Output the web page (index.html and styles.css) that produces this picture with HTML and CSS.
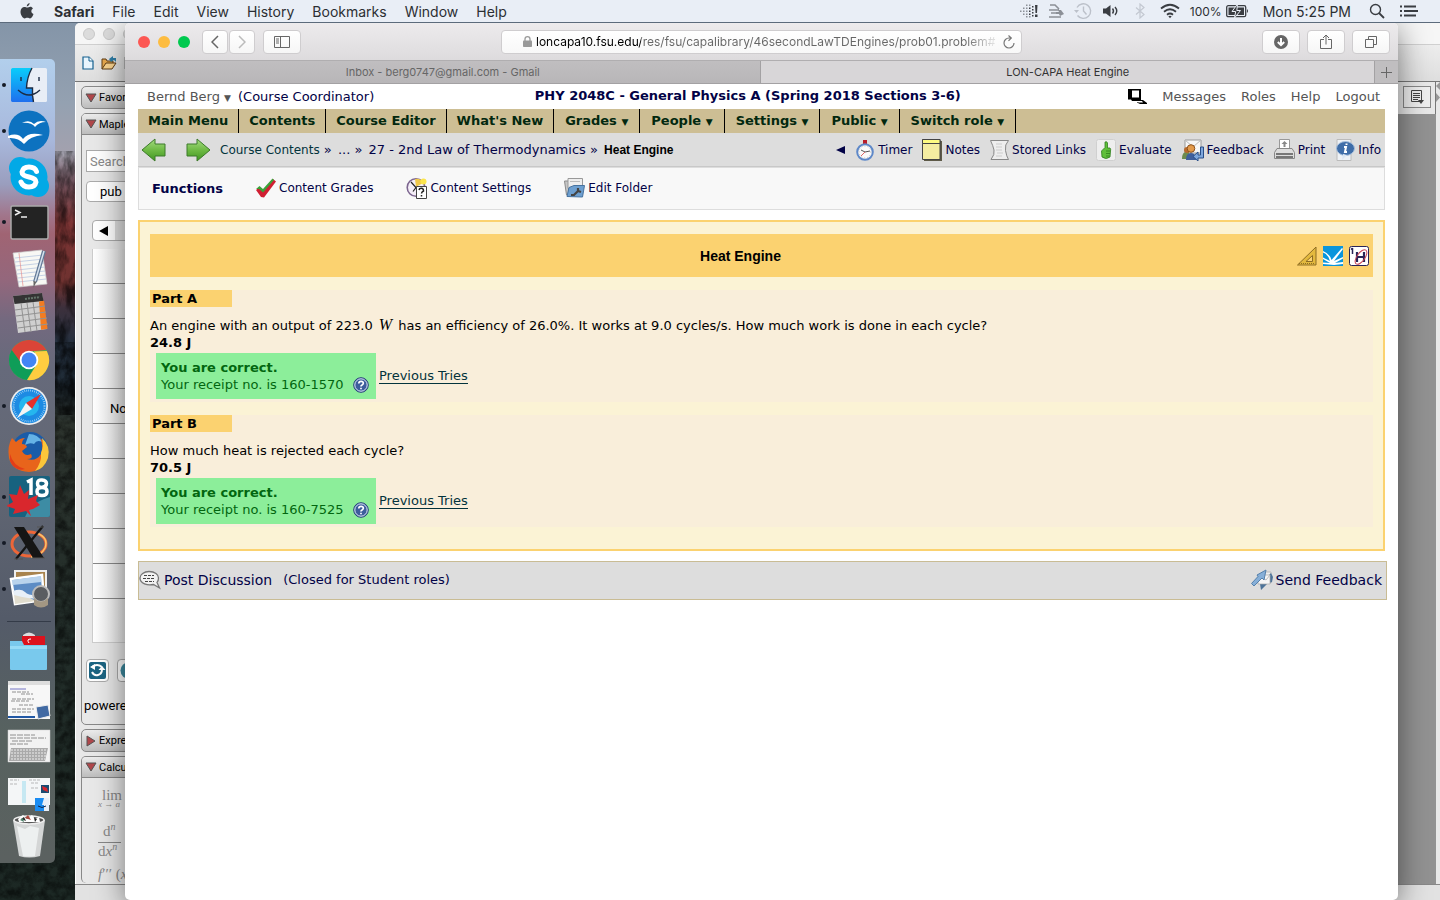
FILE: index.html
```html
<!DOCTYPE html>
<html lang="en">

<head>
    <title>LON-CAPA Heat Engine</title>
    <meta charset="utf-8">
    <meta name="viewport" content="width=device-width, initial-scale=1">
    <link rel="stylesheet" href="styles.css">
</head>

<body>
    <!-- System menu bar -->
    <header class="menubar">
        <svg class="apple" width="14" height="16" viewBox="0 0 14 16"><path fill="#3a3d42" d="M9.600 0c.1 1.500-1.200 3.300-2.800 3.400C6.600 1.900 8.100.2 9.600 0zM12.900 5.400c-2.300 1.500-1.900 4.500.6 5.500-.6 1.800-2 4.500-3.500 4.500-1 0-1.400-.6-2.700-.6s-1.700.6-2.600.6C2.800 15.400.5 12 .5 8.700c0-3.200 2-4.800 3.900-4.800 1.200 0 2 .7 2.900.7.800 0 1.800-.8 3.100-.8 1 0 1.900.6 2.500 1.600z"/></svg>
        <nav class="menus">
            <a href="#" class="app-name">Safari</a>
            <a href="#">File</a>
            <a href="#">Edit</a>
            <a href="#">View</a>
            <a href="#">History</a>
            <a href="#">Bookmarks</a>
            <a href="#">Window</a>
            <a href="#">Help</a>
        </nav>
        <div class="status">
            <svg width="18" height="16" viewBox="0 0 18 16"><g fill="#3a3d42"><path d="M15 2h2.500l-.5 8h-1.500zM15 11.500h2.500v2.500H15z"/><path d="M12 3h1.500v1.500H12zM12 6h1.500v1.500H12zM12 9h1.500v1.500H12zM12 12h1.500v1.500H12zM9 4.500h1.500V6H9zM9 7.500h1.500V9H9zM9 10.500h1.500V12H9z"/></g><path fill="#8c9097" d="M6 1.500h1.500V3H6zM6 4.500h1.500V6H6zM6 7.500h1.500V9H6zM6 10.500h1.500V12H6zM6 13h1.500v1.500H6zM3 4.500h1.500V6H3zM3 7.500h1.500V9H3zM3 10.500h1.500V12H3zM0 7.500h1.500V9H0zM9 1.500h1.500V3H9zM9 13h1.500v1.500H9z"/></svg>
            <svg width="16" height="16" viewBox="0 0 16 16"><path fill="none" stroke="#8c9097" stroke-width="1.600" d="M2 2h5l4 4M1 7h10M3 10h9M1 14h12"/><path fill="#8c9097" d="M10 7h3l3 4-4 2-1-2H8V9h3z"/></svg>
            <svg width="18" height="18" viewBox="0 0 18 18"><g fill="none" stroke="#bcc1ca" stroke-width="1.400"><path d="M3 5.500A7.300 7.300 0 1 1 3.500 13.500"/><path d="M9.500 4.500V9l3 3.500"/></g><path fill="#bcc1ca" d="M0 8h5L2.500 11z"/></svg>
            <svg width="18" height="16" viewBox="0 0 18 16"><path fill="#3a3d42" d="M1 5.500h3L8.500 2v12L4 10.500H1z"/><path fill="none" stroke="#3a3d42" stroke-width="1.400" d="M10.500 5.500q2 2.500 0 5M13 4q3.500 4 0 8"/></svg>
            <svg class="bt" width="10" height="16" viewBox="0 0 10 16"><path fill="none" stroke="#c3c8d1" stroke-width="1.200" d="M1 4.500l8 7L5 15V1l4 3.500-8 7"/></svg>
            <svg width="20" height="16" viewBox="0 0 20 16"><g fill="none" stroke="#3a3d42" stroke-width="1.800"><path d="M1 5.500q9-7.500 18 0M4 8.700q6-5 12 0M7 11.700q3-2.500 6 0"/></g><path fill="#3a3d42" d="M8.300 13.300q1.700-1.300 3.400 0L10 15.200z"/></svg>
            <span class="charge">100%</span>
            <svg class="battery" width="23" height="14" viewBox="0 0 23 14"><rect x=".7" y="1.700" width="19" height="11" rx="1.500" fill="none" stroke="#3a3d42" stroke-width="1.300"/><rect x="2.500" y="3.500" width="15.500" height="7.500" fill="#3a3d42"/><path fill="#3a3d42" d="M21 5v4q2-2 0-4z"/><path fill="#3a3d42" stroke="#e9eef6" stroke-width="1" d="M11.500 0L6 7.500h3.700L8.500 14l6-7.500h-3.700z"/></svg>
            <span class="clock">Mon 5:25 PM</span>
            <svg class="find" width="16" height="16" viewBox="0 0 16 16"><circle cx="6.500" cy="6.500" r="5" fill="none" stroke="#3a3d42" stroke-width="1.400"/><path stroke="#3a3d42" stroke-width="1.800" d="M10 10l5 5"/></svg>
            <svg width="18" height="12" viewBox="0 0 18 12"><path stroke="#3a3d42" stroke-width="2" d="M0 1.500h2M0 6h2M0 10.500h2M4 1.500h12M4 6h14M4 10.500h12"/></svg>
        </div>
    </header>

    <main class="desktop">
        <svg class="wallpaper" width="80" height="880" preserveAspectRatio="none">
            <filter id="rock"><feTurbulence type="fractalNoise" baseFrequency=".12 .05" numOctaves="4"/><feColorMatrix values="0 0 0 0 0  0 0 0 0 0  0 0 0 0 0  2 1 0 0 -1.100"/></filter>
            <filter id="tree"><feTurbulence type="fractalNoise" baseFrequency=".12" numOctaves="4"/><feColorMatrix values="0 0 0 0 0  0 0 0 0 0  0 0 0 0 0  2 1 0 0 -1.100"/></filter>
            <rect y="150" width="80" height="220" filter="url(#rock)" opacity=".6"/>
            <rect y="370" width="80" height="510" filter="url(#tree)" opacity=".5"/>
        </svg>

        <!-- Maple window, mostly behind Safari -->
        <section class="maple">
            <div class="maple-title"><i></i><i></i><i></i></div>
            <div class="maple-tools">
                <svg width="12" height="14" viewBox="0 0 12 14"><path fill="#e8f5fd" stroke="#14618f" stroke-width="1.200" d="M1 1h6l4 4v8H1z"/><path fill="#fff" stroke="#14618f" d="M7 1v4h4"/></svg>
                <svg width="16" height="14" viewBox="0 0 16 14"><path fill="#e8a94e" stroke="#5f3c14" d="M1 13V3h4l1 2h6v3"/><path fill="#fbd590" stroke="#5f3c14" d="M1 13l4-6h10l-4 6z"/><path fill="#2f7fa8" d="M8 3l4-3v2h3v4l-2-2-3 2z"/></svg>
                <svg width="14" height="14" viewBox="0 0 14 14"><path fill="#ddd" stroke="#888" d="M1 1h12v12H1zM3 1v5h8V1"/></svg>
            </div>
            <div class="maple-body">
                <aside class="palettes">
                    <div class="palette-head boxed"><svg width="12" height="10" viewBox="0 0 12 10"><path fill="#b0474b" stroke="#555" d="M1 1h10L6 9z"/></svg>Favor</div>
                    <div class="palette cloud">
                        <div class="palette-head"><svg width="12" height="10" viewBox="0 0 12 10"><path fill="#b0474b" stroke="#555" d="M1 1h10L6 9z"/></svg>Maple</div>
                        <div class="cloud-body">
                            <input class="cloud-search" type="text" placeholder="Search" aria-label="Search">
                            <button class="cloud-group">pub</button>
                            <button class="cloud-back" aria-label="Back"><svg width="9" height="10" viewBox="0 0 9 10"><path d="M9 0v10L0 5z"/></svg></button>
                            <ul class="cloud-list">
                                <li></li><li></li><li></li><li></li><li>No</li><li></li><li></li><li></li><li></li><li></li><li></li>
                            </ul>
                            <div class="cloud-actions">
                                <button aria-label="Refresh"><svg width="17" height="17" viewBox="0 0 17 17"><rect width="17" height="17" rx="2" fill="#1b6482"/><path fill="none" stroke="#fff" stroke-width="2" d="M3 5q5-4 10 0M3 10q2 4 6 3 4-1 4-6"/><path fill="#fff" d="M9.500 8h7L13 4zM1 5l5-3v6z"/></svg></button>
                                <button aria-label="Web"><svg width="17" height="17" viewBox="0 0 17 17"><circle cx="8.500" cy="8.500" r="8" fill="#3e8ba0"/></svg></button>
                            </div>
                            <p class="powered">powere</p>
                        </div>
                    </div>
                    <div class="palette-head boxed"><svg width="12" height="12" viewBox="0 0 12 12"><path fill="#b0474b" stroke="#555" d="M2 1v10l8-5z"/></svg>Expre</div>
                    <div class="palette calculus">
                        <div class="palette-head"><svg width="12" height="10" viewBox="0 0 12 10"><path fill="#b0474b" stroke="#555" d="M1 1h10L6 9z"/></svg>Calcu</div>
                        <div class="formulas">
                            <div class="limit"><span>lim</span><small><i>x</i> → <i>a</i></small></div>
                            <div class="frac"><span>d<sup><i>n</i></sup></span><span>d<i>x</i><sup><i>n</i></sup></span></div>
                            <div class="prime"><i>f</i>′′′ (<i>x</i></div>
                        </div>
                    </div>
                </aside>
                <div class="sheet">
                    <div class="sheet-bar"><button aria-label="Page view"><svg width="14" height="14" viewBox="0 0 14 14"><path fill="none" stroke="#444" d="M1.500.5h10v11h-10z"/><path stroke="#444" d="M3 3.500h7M3 5.500h7M3 7.500h7M3 9.500h5"/><path fill="#444" d="M8 10h6l-3 4z"/></svg></button></div>
                </div>
                <div class="maple-edge"><svg width="4" height="24" viewBox="0 0 4 24"><path fill="#999" d="M4 0v8L0 4zM0 11v9l4-4.500z"/></svg></div>
            </div>
            <div class="maple-status"></div>
        </section>

        <!-- Safari window -->
        <section class="safari">
            <div class="toolbar">
                <div class="toolbar-left">
                    <span class="lights"><i class="red"></i><i class="amber"></i><i class="green"></i></span>
                    <span class="history">
                        <button aria-label="Back"><svg width="8" height="14" viewBox="0 0 8 14"><path fill="none" stroke="#666" stroke-width="1.500" d="M7 1L1 7l6 6"/></svg></button>
                        <button aria-label="Forward"><svg width="8" height="14" viewBox="0 0 8 14"><path fill="none" stroke="#bbb" stroke-width="1.500" d="M1 1l6 6-6 6"/></svg></button>
                    </span>
                    <button class="wide" aria-label="Show sidebar"><svg width="16" height="12" viewBox="0 0 16 12"><path fill="none" stroke="#666" d="M.5.500h15v11H.5zM6.500.500v11M2 3h3M2 5h3M2 7h3"/></svg></button>
                </div>
                <div class="address">
                    <svg width="9" height="11" viewBox="0 0 9 11"><rect y="4.500" width="9" height="6.500" rx=".8" fill="#999"/><path fill="none" stroke="#999" stroke-width="1.300" d="M2 5V3q0-2.300 2.500-2.300T7 3v2"/></svg>
                    <input class="url" type="text" aria-label="Address" value="loncapa10.fsu.edu/res/fsu/capalibrary/46secondLawTDEngines/prob01.problem#">
                    <button class="reload" aria-label="Reload"><svg width="12" height="14" viewBox="0 0 12 14"><path fill="none" stroke="#777" stroke-width="1.200" d="M11 8A5 5 0 1 1 6 3h2M5.500.500L8.300 3 5.500 5.800"/></svg></button>
                </div>
                <div class="toolbar-right">
                    <button class="wide" aria-label="Downloads"><svg width="14" height="14" viewBox="0 0 14 14"><circle cx="7" cy="7" r="7" fill="#666"/><path fill="none" stroke="#fff" stroke-width="2" d="M7 3v7M3.800 7L7 10.200 10.200 7"/></svg></button>
                    <button class="wide" aria-label="Share"><svg width="12" height="16" viewBox="0 0 12 16"><path fill="none" stroke="#666" d="M4 5.500H.5v9h11v-9H8M6 10.500V1M3 4l3-3 3 3"/></svg></button>
                    <button class="wide" aria-label="Show tabs"><svg width="12" height="12" viewBox="0 0 12 12"><path fill="none" stroke="#666" d="M.5 3.500h8v8h-8zM3.500 3.500v-3h8v8h-3"/></svg></button>
                </div>
            </div>
            <div class="tabs">
                <a href="#" class="tab">Inbox - berg0747@gmail.com - Gmail</a>
                <a href="#" class="tab current">LON-CAPA Heat Engine</a>
                <button class="new-tab" aria-label="New tab"><svg width="11" height="11" viewBox="0 0 11 11"><path stroke="#666" d="M5.500 0v11M0 5.500h11"/></svg></button>
            </div>

            <div class="page">
                <div class="page-top">
                    <div class="user"><a href="#">Bernd Berg <small>▼</small></a><span>(Course Coordinator)</span></div>
                    <h1>PHY 2048C - General Physics A (Spring 2018 Sections 3-6)</h1>
                    <nav class="account">
                        <svg width="20" height="15" viewBox="0 0 20 15"><path d="M1 0h13v11h2l4 3v1h-7l-3-1.500V13l2 .5h4l-1-1.500H5l-1-1.500H1zM5 1.500v7h7v-7z" fill-rule="evenodd"/></svg>
                        <a href="#">Messages</a>
                        <a href="#">Roles</a>
                        <a href="#">Help</a>
                        <a href="#">Logout</a>
                    </nav>
                </div>

                <nav class="main-menu">
                    <a href="#">Main Menu</a>
                    <a href="#">Contents</a>
                    <a href="#">Course Editor</a>
                    <a href="#">What's New</a>
                    <a href="#" class="drop">Grades <small>▼</small></a>
                    <a href="#" class="drop">People <small>▼</small></a>
                    <a href="#" class="drop">Settings <small>▼</small></a>
                    <a href="#" class="drop">Public <small>▼</small></a>
                    <a href="#" class="drop">Switch role <small>▼</small></a>
                </nav>

                <div class="crumb-bar">
                    <a href="#" class="step" aria-label="Previous"><svg width="26" height="24" viewBox="0 0 26 24"><defs><linearGradient id="leaf" x2="0" y2="1"><stop stop-color="#a5dc82"/><stop offset=".5" stop-color="#6fba45"/><stop offset="1" stop-color="#3f9620"/></linearGradient></defs><path fill="url(#leaf)" stroke="#3c7a2a" d="M1 12L14 1v5h10v12H14v5z"/></svg></a>
                    <a href="#" class="step" aria-label="Next"><svg width="26" height="24" viewBox="0 0 26 24"><path fill="url(#leaf)" stroke="#3c7a2a" d="M25 12L12 1v5H2v12h10v5z"/></svg></a>
                    <div class="crumbs"><a href="#" class="home">Course Contents</a> » <a href="#">...</a> » <a href="#">27 - 2nd Law of Thermodynamics</a> » <strong>Heat Engine</strong></div>
                    <div class="tools">
                        <a href="#" aria-label="Collapse"><svg width="9" height="8" viewBox="0 0 9 8"><path fill="#020246" d="M9 0v8L0 4z"/></svg></a>
                        <a href="#"><svg width="20" height="22" viewBox="0 0 20 22"><path fill="#b91c28" d="M8 1h4v4H8z"/><circle cx="10" cy="13" r="7.800" fill="#fafafa" stroke="#5e88c8" stroke-width="2"/><circle cx="10" cy="13" r="6" fill="none" stroke="#bbb" stroke-dasharray="1 2"/><path fill="none" stroke="#555" d="M6 11l4 2 5-1"/><path stroke="#d66" d="M10 13l-4 4"/></svg>Timer</a>
                        <a href="#"><svg width="20" height="22" viewBox="0 0 20 22"><path fill="#5e5a48" d="M2 2h18v20H2z"/><path fill="#f4eda1" stroke="#444" d="M.5.500h17.500v20H.5z"/><path fill="#fdfb82" stroke="#444" d="M.5.500h17.500v4H.5z"/></svg>Notes</a>
                        <a href="#"><svg width="19" height="20" viewBox="0 0 19 20"><path fill="#eee" stroke="#888" d="M.5.500h18q-4 4-3 10t3 9H1q4-5 3-9.500T.5.500z"/><path stroke="#ccc" d="M6 4h6M6 7h6M6 10h6M7 13h6M6 16h6"/></svg>Stored Links</a>
                        <a href="#"><svg width="20" height="22" viewBox="0 0 20 22"><rect x=".5" y=".5" width="19" height="21" rx="2" fill="#eee" stroke="#d0d0d0"/><path fill="#5fbf3a" stroke="#2f7d1d" stroke-width=".8" d="M9 3q2-1 2.500 1v5H14q1 1 .5 3l-.5 6q-4 3-8 0L5.500 12 9 8.500z"/><path stroke="#2f7d1d" stroke-width=".8" d="M10 12h4M10 14.500h4M10 17h3.500"/></svg>Evaluate</a>
                        <a href="#"><svg width="22" height="22" viewBox="0 0 22 22"><path fill="#f7f7f7" stroke="#999" d="M3 1h16v13H3z"/><path fill="none" stroke="#bbb" d="M3 1l8 7 8-7"/><path fill="#6d8b4f" d="M0 20q0-7 4-7h3v7z"/><circle cx="5" cy="11" r="3" fill="#b86a2d"/><circle cx="9" cy="9.500" r="3.800" fill="#e39a4a" stroke="#8c511c"/><path fill="#3f5f9c" d="M4 21q0-7 5-7t5 7z"/><path fill="#7ea7dc" stroke="#274d88" d="M18.500 8v8H16v-3l-5 4.500 5 4.500v-3h5.500V8z"/></svg>Feedback</a>
                        <a href="#"><svg width="21" height="22" viewBox="0 0 21 22"><path fill="#fff" stroke="#999" d="M5.500.500h10v11h-10z"/><path fill="#888" d="M10.500 2l3 3h-2v3h-2V5h-2z"/><path fill="#ddd" stroke="#888" d="M3 9.500h15l2.500 4v6H.5v-6z"/><path stroke="#555" stroke-width="1.500" d="M2 15h17M2 18h17"/></svg>Print</a>
                        <a href="#"><svg width="20" height="22" viewBox="0 0 20 22"><path fill="#eef1f5" stroke="#bbb" d="M2 .5h14v21H2z"/><ellipse cx="10.500" cy="9.500" rx="9" ry="7" fill="#3f6da8" stroke="#a8c0dd"/><path fill="#dbe6f3" d="M8 15l-1 6 5-5z"/><path fill="none" stroke="#fff" stroke-width="2" d="M11.500 4.500v1.500M9 8h2l-1 5h2"/></svg>Info</a>
                    </div>
                </div>

                <div class="functions">
                    <h2>Functions</h2>
                    <a href="#"><svg width="20" height="20" viewBox="0 0 20 20"><path fill="#d01f32" d="M0 12l3-2.500L7 13 17 1l3 2.500L8 19.500 5 19z"/><path fill="#3ba23a" d="M0 11l3.500-3L7 11 16.500.5 18 2 7 14.500 3 11z"/></svg>Content Grades</a>
                    <a href="#"><svg width="21" height="22" viewBox="0 0 21 22"><circle cx="10" cy="10.500" r="8.800" fill="#f4eef7" stroke="#7d6690" stroke-width="1.600"/><path fill="#f0c94a" d="M10 10l-1-8q6-1 8 4z"/><path fill="none" stroke="#222" stroke-width="1.200" d="M5 5l5 5.500-3 4"/><circle cx="17.500" cy="4.500" r="3" fill="#fbe54c"/><path fill="#fff" stroke="#444" d="M10.500 9.500h10v12h-10z"/><path fill="none" stroke="#222" stroke-width="1.500" d="M13 13q.5-2 2.500-1.800T17.500 14q-2 1-2 2.500M15.500 18v1.500"/></svg>Content Settings</a>
                    <a href="#"><svg width="21" height="20" viewBox="0 0 21 20"><path fill="#c6c6c6" stroke="#8a8a8a" d="M.5 3h4v14h-2z"/><path fill="#eee" stroke="#999" d="M4 .5h14.500v10H4z"/><path stroke="#bbb" d="M6 3.500h10"/><path fill="#6d9fd0" stroke="#46729f" d="M3 18.500l2-9 5-2h10.500l-2 11.500z"/><path fill="none" stroke="#444" stroke-width="2.200" d="M7 17h3l4-4 3 1M14 10v3"/></svg>Edit Folder</a>
                </div>

                <div class="problem">
                    <div class="problem-head">
                        <h3>Heat Engine</h3>
                        <div class="resources">
                            <a href="#" aria-label="Geometry"><svg width="20" height="20" viewBox="0 0 20 20"><path fill="#e3b93e" stroke="#8d6c24" fill-rule="evenodd" d="M19 1v18H.5zM15.500 9.500v6H9z"/><path stroke="#8d6c24" stroke-dasharray="1 1" d="M2 17.500h16"/></svg></a>
                            <a href="#" aria-label="Textbook"><svg width="20" height="20" viewBox="0 0 20 20"><path fill="#0a95dc" d="M0 0h20v20H0z"/><path fill="#fff" d="M0 5q7 3 8.500 9L19 2l1 1-9 12 9-4v1.500L12 17l8-1v2l-9 1-11-1v-1.500l7 .5-7-4v-1.500l7 3.500Q5 8 0 6.500z"/></svg></a>
                            <a href="#" aria-label="Elements"><svg width="20" height="20" viewBox="0 0 20 20"><rect x=".5" y=".5" width="19" height="19" rx="2" fill="#fff" stroke="#292457"/><path stroke="#292457" stroke-width="2.200" d="M8 6v10M15 6v10M8 11h7"/><path stroke="#292457" stroke-width="1.500" d="M3.500 2v6M2 3.500L3.500 2"/><ellipse cx="12" cy="11" rx="4" ry="8.500" fill="none" stroke="#c94455" transform="rotate(35 12 11)"/></svg></a>
                        </div>
                    </div>

                    <div class="part">
                        <h4>Part A</h4>
                        <p>An engine with an output of 223.0 <i class="math">W</i> has an efficiency of 26.0%. It works at 9.0 cycles/s. How much work is done in each cycle?</p>
                        <p><strong>24.8 J</strong></p>
                        <div class="result">
                            <div class="correct">
                                <strong>You are correct.</strong>
                                <span>Your receipt no. is 160-1570 <a href="#" aria-label="Help"><svg width="16" height="16" viewBox="0 0 16 16"><circle cx="8" cy="8" r="7.300" fill="#3d5d9c" stroke="#2a437c"/><circle cx="8" cy="8" r="6.200" fill="none" stroke="#dce6f5"/><path fill="none" stroke="#fff" stroke-width="1.700" d="M5.800 6.500q0-2.200 2.300-2.200t2.200 2q0 1-1.200 1.600T8 9.500M8 10.700v1.600"/></svg></a></span>
                            </div>
                            <a href="#" class="tries">Previous Tries</a>
                        </div>
                    </div>

                    <div class="part">
                        <h4>Part B</h4>
                        <p>How much heat is rejected each cycle?</p>
                        <p><strong>70.5 J</strong></p>
                        <div class="result">
                            <div class="correct">
                                <strong>You are correct.</strong>
                                <span>Your receipt no. is 160-7525 <a href="#" aria-label="Help"><svg width="16" height="16" viewBox="0 0 16 16"><circle cx="8" cy="8" r="7.300" fill="#3d5d9c" stroke="#2a437c"/><circle cx="8" cy="8" r="6.200" fill="none" stroke="#dce6f5"/><path fill="none" stroke="#fff" stroke-width="1.700" d="M5.800 6.500q0-2.200 2.300-2.200t2.200 2q0 1-1.200 1.600T8 9.500M8 10.700v1.600"/></svg></a></span>
                            </div>
                            <a href="#" class="tries">Previous Tries</a>
                        </div>
                    </div>
                </div>

                <footer class="discussion">
                    <a href="#"><svg width="22" height="20" viewBox="0 0 22 20"><path fill="#f2f2f2" stroke="#777" stroke-width="1.300" d="M10 1.500c6 0 9.500 3 9.500 6.500 0 2-.5 3.500-1.500 4.500l2.500 5.500-6-3.500c-6 1.500-13.500-1-13.500-6.500 0-3.500 4-6.500 9-6.500z"/><path stroke="#444" stroke-dasharray="3 1" d="M5 5.500h10M4 8.500h11M6 11.500h9"/></svg>Post Discussion</a>
                    <span>(Closed for Student roles)</span>
                    <a href="#" class="send"><svg width="22" height="22" viewBox="0 0 22 22"><path fill="#eee" stroke="#bbb" d="M12 3h8v11H8V8z"/><path fill="#4d7399" d="M20 4l2 4-1 5-5 2-6 6-1-6z"/><path fill="#f5f5f5" stroke="#aaa" stroke-width=".7" d="M7 6h12v9H7z"/><path fill="none" stroke="#bbb" d="M12 9l3 2 4-5"/><path fill="#86afd8" stroke="#5681ac" d="M15 1l-2 10-2-2-8 8-2.500-2.500 6.500-7-1-1.500z"/></svg>Send Feedback</a>
                </footer>
            </div>
        </section>

        <!-- Dock -->
        <nav class="dock">
            <ul class="apps">
                <li class="running"><svg width="44" height="44" viewBox="0 0 44 44"><defs><linearGradient id="fin" x2="0" y2="1"><stop stop-color="#09cdfb"/><stop offset="1" stop-color="#1f6fee"/></linearGradient></defs><rect x="4" y="5" width="36" height="34" rx="1.500" fill="#e9eef6"/><path fill="url(#fin)" d="M4 6.500Q4 5 5.500 5H25q-5 9-5.500 20h6q-.5 7 1 14H5.500Q4 39 4 37.500z"/><path fill="none" stroke="#1c2c44" stroke-width="1.400" d="M14 14v4M32 14v4M11 27q11 10 22 0M25 5q-5 9-5.500 20h6q-.5 7 1 14"/></svg></li>
                <li class="running"><svg width="44" height="44" viewBox="0 0 44 44"><circle cx="22" cy="22" r="20.500" fill="#0d72c0"/><path fill="#fff" d="M15 14q7-4 12 1 5-5 12-2-7 0-11 5-4-5-13-4zM1 27q10-4 15 3 6-8 20-4-13 1-19 9Q11 28 1 29z"/></svg></li>
                <li><svg width="44" height="44" viewBox="0 0 44 44"><circle cx="22" cy="22" r="18.500" fill="#02a9e6"/><circle cx="13" cy="13" r="11" fill="#02a9e6"/><circle cx="31" cy="31" r="11" fill="#02a9e6"/><path fill="none" stroke="#fff" stroke-width="5" stroke-linecap="round" d="M29.500 16.500Q28 12 22 12t-7 5q0 3.500 7 5t7 5q-1 5-7 5t-8-5"/></svg></li>
                <li class="running"><svg width="44" height="44" viewBox="0 0 44 44"><rect x="4" y="6" width="37" height="33" rx="1.500" fill="#232323" stroke="#aaa" stroke-width="1.500"/><path fill="none" stroke="#eee" stroke-width="1.500" d="M8 10l5 2.500L8 15M14 17h6"/></svg></li>
                <li><svg width="44" height="44" viewBox="0 0 44 44"><path fill="#f8f8f4" stroke="#ccc" stroke-width=".7" d="M6 7l29-3 5 34-28 3z"/><path stroke="#b7c7e0" stroke-width=".8" d="M8 12l28-3M8 16l29-3M9 20l28-3M10 24l28-3M10 28l28-3M11 32l28-3M11 36l28-3"/><path stroke="#e69a9a" stroke-width=".8" d="M12 7l4 33"/><path stroke="#627895" stroke-width="4" d="M37 5L28 36"/><path stroke="#d6e2ee" stroke-width="1.500" d="M37 5L28 36"/><path fill="#666" d="M26.500 35l3 .8-3 6z"/></svg></li>
                <li><svg width="44" height="44" viewBox="0 0 44 44"><path fill="#cfcfcf" d="M6 4l29-3 5 36-29 4z"/><path fill="#333" d="M6 4l29-3 1.500 8-29 3z"/><path fill="#f27c22" d="M32 9.500l5-.7 3.500 28-6.500 1z"/><path stroke="#929292" d="M8 18l30-4M9 24l30-4M10 30l30-4M11 36l30-4M14 11l4 29M20 11l4 29M26 10l4 29"/><path stroke="#64756a" stroke-dasharray="2 1" stroke-width="2" d="M18 7l15-2"/></svg></li>
                <li><svg width="44" height="44" viewBox="0 0 44 44"><circle cx="22" cy="22" r="20" fill="#4caf50"/><path fill="#db4437" d="M4.700 12A20 20 0 0 1 39.300 12L22 13.500 13.500 27z"/><path fill="#0f9d58" d="M4.700 12A20 20 0 0 0 20 42l9-16H15z"/><path fill="#ffcd40" d="M39.800 13A20 20 0 0 1 20 42l10-16q2-6-3-12.500z"/><circle cx="22" cy="22" r="9.300" fill="#fff"/><circle cx="22" cy="22" r="7.500" fill="#4285f4"/></svg></li>
                <li class="running"><svg width="44" height="44" viewBox="0 0 44 44"><circle cx="22" cy="22" r="19" fill="#eee"/><circle cx="22" cy="22" r="17.300" fill="#1d8be3"/><circle cx="22" cy="22" r="10" fill="#25b6ee"/><circle cx="22" cy="22" r="15.500" fill="none" stroke="#cbe8fb" stroke-width="2" stroke-dasharray=".6 1.400"/><path fill="#e8302a" d="M34 10L25 25l-6-6z"/><path fill="#f4f4f4" d="M10 34l9-15 6 6z"/></svg></li>
                <li><svg width="44" height="44" viewBox="0 0 44 44"><circle cx="23" cy="20" r="18" fill="#1a5ca8"/><path fill="#65b3e6" d="M22 4q9 0 13 8-5-3-8 2-4-2-9 1z"/><path fill="#e8641b" d="M5 8l4 4q4-4 9-4-3 2-3 6 4 0 5 3l-5 4q3 6 9 3 3 5-4 5 9 3 14-5 3-8-1-16 9 7 7 18-3 15-18 16Q5 41 2 28 0 16 5 8z"/><path fill="#fbc63a" d="M35 8q9 8 6 20-4 11-13 13 7-9 6-18 3-7 1-15z"/><path fill="#e33d18" d="M3 24q3 12 15 15Q8 42 3 31z"/></svg></li>
                <li class="running"><svg width="44" height="44" viewBox="0 0 44 44"><rect x="2" y="1" width="41" height="41" rx="2" fill="#17627f"/><path fill="#3d8ca4" d="M43 22v18q0 2-2 2H18Q24 27 43 22z"/><path fill="none" stroke="#fff" stroke-width="3.500" d="M20 7l4-2v15M35 12.500q-4.500 0-4.500-4T35 5t4.500 3.500-4.500 4q-5 0-5 4t5 4 5-4-5-4z"/><path fill="#d9272d" d="M13 10l4 9 5-4-1 9 10-4-2 6 4 4-7 4-4 1 2 6-5-5-13 3 2-5-9-3 7-4-4-8 8 1z"/></svg></li>
                <li class="running"><svg width="44" height="44" viewBox="0 0 44 44"><ellipse cx="22" cy="23" rx="17" ry="12" fill="none" stroke="#ed6638" stroke-width="3"/><path fill="none" stroke="#f6c56b" stroke-width="1.500" d="M30 12q12 5 8 15-4 8-14 9"/><path fill="#151515" d="M7 6h10l20 31H26z"/><path stroke="#151515" stroke-width="2.300" d="M36 5L9 38"/><path stroke="#555" d="M30 6h7M7 38h9M25 37h13"/></svg></li>
                <li class="running"><svg width="44" height="44" viewBox="0 0 44 44"><path fill="#a8834d" stroke="#eee" stroke-width="2" d="M8 4h31v24H8z"/><path fill="#5d8cc4" stroke="#fff" stroke-width="2.500" d="M4 12l31-4 2 25-29 4z"/><path fill="#b9d3ec" d="M5 13l29-4 .5 6-29 3z"/><path fill="#e1ddce" d="M7 27l12 2 10 5-21 3z"/><path fill="#e8f0f8" d="M6 24q8-3 12 1t14 3l3 4q-14 0-28-4z"/><circle cx="34" cy="27" r="8" fill="#5a5d61" stroke="#bbb" stroke-width="2"/><path fill="#a39783" d="M27 31q7 7 14 0v7q-7 5-14 0z"/></svg></li>
            </ul>
            <hr>
            <ul class="recent">
                <li><svg width="44" height="44" viewBox="0 0 44 44"><path fill="#ddd" d="M16 5q6-5 12 0v4H16z"/><path fill="#dc121d" d="M15 6h23v12H15z"/><path fill="#79c9ed" d="M3 11h12l2 4h23v24q0 1-1 1H4q-1 0-1-1z"/><path fill="#97dcf7" d="M3 16h37v3H3z"/><path fill="none" stroke="#fff" d="M22 13q-3-4 2-4"/></svg></li>
                <li><svg width="44" height="44" viewBox="0 0 44 44"><path fill="#f7f7f7" d="M1 5h42v38H1z"/><path fill="#ddd" d="M1 5h42v4H1z"/><path fill="#2158a5" d="M1 40h27v2H1z"/><path stroke="#5454b7" stroke-width=".8" d="M3 13h16"/><path stroke="#777" stroke-width=".8" stroke-dasharray="4 1" d="M5 16h17M14 18h12M5 23h22M4 25h18M12 29h15M5 33h22M5 36h20"/><path fill="#416aa3" stroke="#eee" d="M29 31l12-2 2 11-12 3z"/></svg></li>
                <li><svg width="44" height="44" viewBox="0 0 44 44"><path fill="#f2f2f2" stroke="#ccc" stroke-width=".5" d="M1 8h42v32H1z"/><path stroke="#777" stroke-width=".8" stroke-dasharray="6 1" d="M3 13h25M3 16h36M5 19h20M3 22h18"/><path fill="#aaa" d="M4 26h37l-3 13H2z"/><path stroke="#eee" stroke-dasharray="2 1" d="M4 28h36M4 31h36M4 34h36M4 37h34"/></svg></li>
                <li><svg width="44" height="44" viewBox="0 0 44 44"><path fill="#f4f6f7" d="M1 10h42v27H1z"/><path fill="#c6e8f2" d="M15 13h4v22h-4z"/><path stroke="#aaa" stroke-width=".8" stroke-dasharray="3 1" d="M3 12h9M22 12h12M24 15h8M3 16h7M24 20h8"/><path fill="#194b72" d="M34 17h8v8h-8z"/><path fill="#d9272d" d="M35 18l5 2 1 4-5-2z"/><path fill="#e9eef6" d="M28 30h14v13H28z"/><path fill="#1a8cf2" d="M28 30h9l-2 7h2v6h-9z"/><path fill="none" stroke="#124" d="M31 38q4 3 8 0"/></svg></li>
                <li><svg width="44" height="44" viewBox="0 0 44 44"><path fill="#d4d6d6" d="M6 6h32l-5 36q-11 3-21 0z"/><path fill="#edf0f0" d="M10 12l8 3 5-3 9 2-4 28q-8 1-12 0z"/><ellipse cx="22" cy="6" rx="15" ry="4" fill="#555" stroke="#eee" stroke-width="1.500"/><path fill="#fff" d="M11 5l5-4 4 4 5-4 3 4 4-2 1 5H12z"/><path fill="#222" d="M14 5l3-2 2 4zM27 4l3 1-2 3z"/><path fill="#a9483f" d="M18 4l3-3 3 5z"/><path fill="#4b8068" d="M13 6l3-2 1 4z"/></svg></li>
            </ul>
        </nav>
    </main>
</body>

</html>
```
FILE: styles.css
```css
* {
    box-sizing: border-box;
}

body {
    margin: 0;
    height: 100vh;
    display: flex;
    flex-direction: column;
    overflow: hidden;
    font-family: "DejaVu Sans", Verdana, sans-serif;
    font-size: 13px;
    background: white;
}

a {
    color: inherit;
    text-decoration: none;
}

svg {
    display: block;
    flex: none;
}

button {
    display: flex;
    align-items: center;
    justify-content: center;
    padding: 0;
    font: inherit;
}

h1,
h2,
h3,
h4,
p,
ul {
    margin: 0;
    padding: 0;
}

ul {
    list-style: none;
}

/* System menu bar */
.menubar {
    display: flex;
    align-items: center;
    height: 23px;
    padding: 0 22px 0 20px;
    background: #e9eef6;
    border-bottom: 1px solid #5c6b7c;
    color: #2c2f33;
    font-family: Inter, sans-serif;
    font-size: 14px;
}

.menus {
    display: flex;
    gap: 18px;
    margin-left: 20px;
}

.app-name {
    font-weight: 700;
}

.status {
    display: flex;
    align-items: center;
    gap: 10px;
    margin-left: auto;
}

.bt {
    margin: 0 5px;
}

.charge {
    font-size: 12px;
}

.battery {
    margin-left: -6px;
}

.clock {
    margin: 0 8px 0 4px;
}

.find {
    margin-right: 5px;
}

/* Desktop */
.desktop {
    position: relative;
    flex: 1;
    overflow: hidden;
    background: linear-gradient(#8495a8 0, #94a1b1 80px, #a3a1ae 130px, #765560 160px, #7c3434 200px, #6f3230 260px, #3c303c 285px, #25303f 320px, #1f2b36 360px, #2c332d 400px, #222d29 600px, #1c2824 880px);
}

.wallpaper {
    position: absolute;
    left: 0;
    top: 0;
}

/* Maple window */
.maple {
    position: absolute;
    left: 75px;
    right: 0;
    top: 0;
    bottom: 0;
    display: flex;
    flex-direction: column;
    border-top-left-radius: 5px;
    overflow: hidden;
    background: #e8e8e8;
    font-family: Roboto, sans-serif;
    font-size: 12px;
}

.maple-title {
    display: flex;
    gap: 8px;
    height: 22px;
    padding: 5px 8px;
    background: #f6f6f6;
    border-bottom: 1px solid #d0d0d0;
}

.maple-title i {
    width: 12px;
    height: 12px;
    border: 1px solid #c8c8c8;
    border-radius: 50%;
    background: #dcdcdc;
}

.maple-tools {
    display: flex;
    align-items: center;
    gap: 7px;
    height: 36px;
    padding-left: 7px;
    background: linear-gradient(#ededed, #dedede);
}

.maple-body {
    flex: 1;
    display: flex;
    min-height: 0;
    border-top: 1px solid #777;
}

.palettes {
    width: 50px;
    padding: 4px 0 0 5px;
    border-left: 1px solid #fff;
    overflow: hidden;
    white-space: nowrap;
}

.palette-head {
    display: flex;
    align-items: center;
    gap: 2px;
    width: 100px;
    height: 21px;
    padding-left: 3px;
    background: linear-gradient(#ececec, #bdbdbd);
    border-bottom: 1px solid #888;
    font-size: 11px;
}

.palette-head.boxed,
.palette {
    width: 100px;
    border: 1px solid #888;
    border-radius: 5px;
    overflow: hidden;
    margin-bottom: 4px;
}

.palette-head.boxed {
    height: 23px;
}

.cloud {
    height: 612px;
}

.cloud-body {
    display: flex;
    flex-direction: column;
    padding: 15px 0 0 4px;
}

.cloud-search {
    height: 22px;
    padding: 0 3px;
    border: 1px solid #aaa;
    font: 13px Roboto, sans-serif;
}

.cloud-search::placeholder {
    color: #888;
}

.cloud-group {
    justify-content: flex-start;
    height: 21px;
    margin-top: 9px;
    padding-left: 13px;
    border: 1px solid #aaa;
    border-radius: 4px;
    background: #fff;
    font-size: 13px;
}

.cloud-back {
    justify-content: flex-start;
    height: 21px;
    margin: 18px 0 8px 6px;
    padding-left: 6px;
    border: 1px solid #aaa;
    border-radius: 4px;
    background: linear-gradient(90deg, #fff 22px, #ddd 22px);
}

.cloud-list {
    margin-left: 6px;
    border: 1px solid #ccc;
    border-top: 0;
    background: linear-gradient(90deg, #fff, #ddd 40px);
}

.cloud-list li {
    height: 35px;
    padding: 12px 0 0 17px;
    border-bottom: 1px solid #888;
    font-size: 13px;
}

.cloud-list li:last-child {
    height: 43px;
    border: 0;
}

.cloud-actions {
    display: flex;
    gap: 8px;
    margin-top: 16px;
}

.cloud-actions button {
    width: 23px;
    height: 23px;
    border: 1px solid #aaa;
    border-radius: 4px;
    background: #fff;
}

.powered {
    margin: 16px 0 0 -2px;
    font-size: 13px;
}

.calculus {
    height: 127px;
    border-bottom: 0;
}

.formulas {
    width: 60px;
    padding: 13px 0 0 16px;
    color: #888;
    font-family: "Liberation Serif", serif;
    font-size: 15px;
    line-height: 15px;
}

.limit {
    display: flex;
    flex-direction: column;
    line-height: 9px;
}

.limit span {
    margin-left: 4px;
}

.limit small {
    font-size: 9px;
}

.frac {
    display: inline-flex;
    flex-direction: column;
    margin-top: 14px;
}

.frac span:first-child {
    padding: 0 5px 3px;
    border-bottom: 1px solid #888;
}

.frac sup {
    font-size: 10px;
    line-height: 8px;
}

.prime {
    margin-top: 8px;
}

.sheet {
    flex: 1;
    background: #929292;
}

.sheet-bar {
    display: flex;
    justify-content: flex-end;
    height: 32px;
    padding: 4px;
    border-right: 1px solid #777;
    background: #e8e8e8;
}

.sheet-bar button {
    width: 28px;
    height: 22px;
    border: 1px solid #888;
    background: #eee;
}

.maple-edge {
    width: 4px;
    background: #e8e8e8;
}

.maple-status {
    height: 16px;
    border-top: 1px solid #888;
    background: #e2e2e2;
}

/* Safari window */
.safari {
    position: absolute;
    left: 125px;
    right: 42px;
    top: 0;
    bottom: 0;
    display: flex;
    flex-direction: column;
    border-radius: 5px;
    overflow: hidden;
    background: white;
    box-shadow: 0 6px 30px rgba(0, 0, 0, 0.5);
}

.toolbar {
    display: grid;
    grid-template-columns: 1fr 521px 1fr;
    align-items: center;
    height: 38px;
    padding: 0 8px;
    background: linear-gradient(#edebed, #dddbdd);
    border-bottom: 1px solid #b0aeb0;
}

.toolbar-left,
.toolbar-right,
.lights,
.history {
    display: flex;
    align-items: center;
}

.lights {
    gap: 8px;
    margin: 0 12px 0 5px;
}

.lights i {
    width: 12px;
    height: 12px;
    border-radius: 50%;
}

.red {
    background: #fc5753;
}

.amber {
    background: #fdbc40;
}

.green {
    background: #00c94f;
}

.history {
    gap: 1px;
    margin-right: 8px;
}

.toolbar button {
    width: 26px;
    height: 24px;
    border: 1px solid #cfcdcf;
    border-radius: 4px;
    background: linear-gradient(#fff, #f6f6f6);
}

.toolbar .wide {
    width: 38px;
}

.toolbar-right {
    justify-content: flex-end;
    gap: 7px;
}

.address {
    display: flex;
    align-items: center;
    height: 24px;
    padding: 0 5px 0 21px;
    border: 1px solid #cfcdcf;
    border-radius: 4px;
    background: linear-gradient(#fff, #f8f8f8);
}

/* host in black, path in grey, fading out at the end */
.url {
    flex: 1;
    min-width: 0;
    margin-left: 4px;
    padding: 0;
    border: 0;
    outline: 0;
    font: 12px Inter, sans-serif;
    color: transparent;
    background: linear-gradient(90deg, #000 105px, #666 105px, #666 430px, #ddd 456px);
    -webkit-background-clip: text;
    background-clip: text;
}

.toolbar .reload {
    width: 14px;
    height: 16px;
    border: 0;
    background: none;
}

.tabs {
    display: flex;
    height: 23px;
    border-bottom: 1px solid #a3a1a3;
    font-family: Inter, sans-serif;
    font-size: 11px;
    line-height: 22px;
    text-align: center;
}

.tab {
    flex: 636;
    background: linear-gradient(#c0bec0, #b8b6b8);
    color: #666;
}

.tab.current {
    flex: 613;
    border-left: 1px solid #a3a1a3;
    background: #d8d6d8;
    color: #333;
}

.new-tab {
    width: 24px;
    border: 0;
    border-left: 1px solid #a3a1a3;
    background: #c0bec0;
}

/* LON-CAPA page */
.page {
    padding: 0 13px;
    color: #020246;
}

.page-top {
    display: flex;
    align-items: center;
    justify-content: space-between;
    height: 25px;
    padding: 0 5px 0 9px;
}

.user {
    display: flex;
    gap: 7px;
}

.user a,
.account {
    color: #555;
}

.page small {
    font-size: 9px;
}

.page-top h1 {
    padding: 0 6px 2px 0;
    font-size: 13px;
}

.account {
    display: flex;
    align-items: center;
    gap: 15px;
}

.main-menu {
    display: flex;
    height: 24px;
    background: #cdbe94;
    color: #02280f;
    font-size: 13px;
    font-weight: bold;
    line-height: 23px;
}

.main-menu a {
    padding: 0 10px;
    border-right: 1px solid #000;
}

.main-menu .drop {
    padding: 0 11px;
}

.crumb-bar {
    display: flex;
    align-items: center;
    height: 34px;
    padding: 0 4px 0 3px;
    background: #ddd;
    border-bottom: 1px solid #c8c8c8;
}

.step {
    margin-right: 18px;
}

.step + .step {
    margin-right: 9px;
}

.crumbs a + a,
.crumbs strong {
    margin-left: 2px;
}

.crumbs strong {
    color: #000;
    font: bold 12px "Liberation Sans", sans-serif;
}

.crumbs .home {
    color: #03333c;
    font-size: 12px;
}

.tools {
    display: flex;
    gap: 10px;
    margin-left: auto;
    font-size: 12px;
}

.tools a,
.functions a,
.discussion a {
    display: flex;
    align-items: center;
    gap: 3px;
}

.functions {
    display: flex;
    align-items: center;
    height: 43px;
    padding: 0 0 1px 13px;
    background: #f8f8f8;
    border: 1px solid #ddd;
    font-size: 12px;
}

.functions h2 {
    font-size: 13px;
}

.functions a {
    margin-left: 33px;
}

.problem {
    margin-top: 10px;
    padding: 12px 10px 22px;
    border: 2px solid #fbd270;
    background: #fbf3d5;
    color: #000;
}

.problem-head {
    display: flex;
    align-items: center;
    height: 43px;
    padding: 0 4px 0 34px;
    background: #fbd270;
}

.problem-head h3 {
    flex: 1;
    font: bold 14px "Liberation Sans", sans-serif;
    text-align: center;
}

.resources {
    display: flex;
    gap: 6px;
}

.part {
    margin-top: 13px;
    padding-bottom: 3px;
    background: #f9eeda;
    line-height: 17px;
}

.part h4 {
    width: 82px;
    margin-bottom: 10px;
    padding-left: 2px;
    background: #fbd270;
    font-size: 13px;
}

.math {
    margin: 0 2px;
    font: italic 16px "Liberation Serif", serif;
    line-height: 16px;
}

.result {
    display: flex;
    align-items: center;
    gap: 3px;
    margin: 2px 0 0 6px;
}

.correct {
    width: 220px;
    padding: 6px 5px;
    background: #8cee9a;
    color: #026610;
}

.correct strong,
.correct span {
    display: flex;
    align-items: center;
    gap: 9px;
    height: 17px;
}

.tries {
    border-bottom: 1px solid #03333c;
    color: #03333c;
    line-height: 14px;
}

.discussion {
    display: flex;
    align-items: center;
    height: 39px;
    margin: 10px -2px 0 0;
    padding: 0 4px 2px 0;
    border: 1px solid #c9bc94;
    background: #ddd;
}

.discussion a {
    font-size: 14px;
}

.discussion span {
    margin-left: 11px;
}

.discussion .send {
    margin-left: auto;
}

/* Dock */
.dock {
    position: absolute;
    left: 0;
    top: 36px;
    width: 55px;
    height: 804px;
    padding: 3px 4px 0 7px;
    border-radius: 0 5px 5px 0;
    background: linear-gradient(#b2cfec 0, #a8b8dc 80px, #9a9ebe 125px, #a1778d 155px, #a06473 175px, #94677c 220px, #74697f 260px, #666a7b 310px, #636875 400px, #545b69 560px, #57625f 680px, #5b6160 800px);
}

.apps {
    display: grid;
    grid-auto-rows: 1fr;
    height: 550px;
}

.dock li {
    position: relative;
    display: flex;
    align-items: center;
}

.running::before {
    content: "";
    position: absolute;
    left: -5px;
    width: 4px;
    height: 4px;
    border-radius: 50%;
    background: #151a25;
}

.dock hr {
    margin: 9px 0 7px;
    border: 0;
    border-top: 1px solid #343b48;
}

.recent li {
    height: 46px;
}
```
